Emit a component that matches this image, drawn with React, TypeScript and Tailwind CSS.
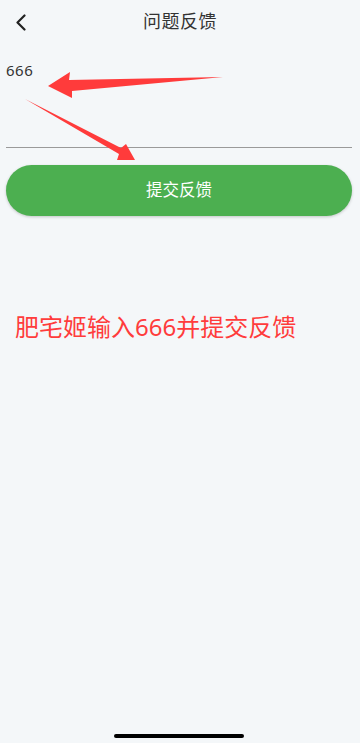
import { useState } from "react";

const FeedbackPage = () => {
  const [text, setText] = useState("666");

  return (
    <div
      className="relative w-[360px] h-[743px] overflow-hidden bg-[#f4f7f9]"
      style={{ fontFamily: '"Noto Sans", "Noto Sans CJK SC", sans-serif' }}
    >
      {/* Header */}
      <header className="relative flex items-center justify-center h-[43px]">
        <button className="absolute left-[11px] top-[10px] w-[20px] h-[24px] flex items-center justify-center" aria-label="返回">
          <svg width="12" height="17" viewBox="0 0 12 17" fill="none">
            <path d="M9.5 1.5 L2.5 8.5 L9.5 15.5" stroke="#222" strokeWidth="2.2" strokeLinecap="round" strokeLinejoin="round" />
          </svg>
        </button>
        <h1 className="text-[18px] leading-none text-[#333] -mt-[1px] tracking-[0.5px]">问题反馈</h1>
      </header>

      {/* Input */}
      <div className="pl-[6px] pr-[8px] pt-[16px]">
        <textarea
          value={text}
          onChange={(e) => setText(e.target.value)}
          className="block w-full h-[89px] resize-none bg-transparent outline-none text-[15px] leading-[22px] text-[#333] tracking-[0.5px] border-b border-[#9a9a9a]"
        />
        <button className="mt-[17px] w-full h-[51px] rounded-full bg-[#4caf50] text-white text-[16.5px] shadow-[0_1px_3px_rgba(0,0,0,0.2)]">
          提交反馈
        </button>
      </div>

      {/* Annotation */}
      <p className="mt-[96px] pl-[15px] text-[24px] leading-[30px] text-[#ff3c3c]">肥宅姬输入666并提交反馈</p>

      <svg className="absolute left-0 top-0 pointer-events-none" width="360" height="200" viewBox="0 0 360 200">
        <polygon points="48,86 70,72 69,80 223,77 72,91 72,98" fill="#ff3b3b" />
        <polygon points="25,99 121,148 126,144 135,160 117,160 119,154" fill="#ff3b3b" />
      </svg>

      {/* Home indicator */}
      <div className="absolute bottom-[5px] left-[114px] w-[130px] h-[4px] rounded-full bg-black" />
    </div>
  );
};

export default function App() {
  return <FeedbackPage />;
}
